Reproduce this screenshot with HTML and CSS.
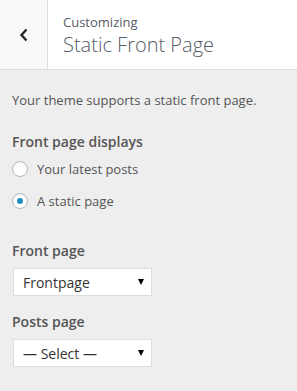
FILE: index.html
```html
<!DOCTYPE html>
<html lang="en">
<head>
    <meta charset="UTF-8">
    <meta name="viewport" content="width=device-width, initial-scale=1.0">
    <title>Static Front Page</title>
    <link rel="stylesheet" href="styles.css">
</head>
<body>
    <div class="panel-header">
        <button class="back-btn" aria-label="Back">
            <svg width="10" height="14" viewBox="0 0 10 14"><path d="M7.5 1.5 L2.5 7 L7.5 12.5" fill="none" stroke="#23282d" stroke-width="2.4"/></svg>
        </button>
        <div class="panel-title">
            <span class="action">Customizing</span>
            <h3>Static Front Page</h3>
        </div>
    </div>

    <div class="section">
        <p class="description">Your theme supports a static front page.</p>

        <div class="control">
            <span class="control-title">Front page displays</span>
            <label class="radio-row"><input type="radio" name="show_on_front"> Your latest posts</label>
            <label class="radio-row"><input type="radio" name="show_on_front" checked> A static page</label>
        </div>

        <div class="control select-control">
            <span class="control-title">Front page</span>
            <div class="select-wrap">
                <select><option>Frontpage</option></select>
            </div>
        </div>

        <div class="control">
            <span class="control-title">Posts page</span>
            <div class="select-wrap">
                <select><option>&mdash; Select &mdash;</option></select>
            </div>
        </div>
    </div>
</body>
</html>
```

FILE: styles.css
```css
body {
    margin: 0;
    background: #eee;
    font-family: "Open Sans", "Noto Sans", sans-serif;
    color: #555;
}
.panel-header {
    display: flex;
    height: 69px;
    background: #fff;
    border-bottom: 1px solid #ddd;
}
.back-btn {
    width: 48px;
    height: 69px;
    padding: 0;
    border: none;
    border-right: 1px solid #ddd;
    background: #f9f9f9;
    display: flex;
    align-items: center;
    justify-content: center;
}
.panel-title {
    padding: 13px 0 0 15px;
}
.action {
    display: block;
    font-size: 13px;
    line-height: 18px;
    color: #555d66;
}
.panel-title h3 {
    margin: 1px 0 0;
    font-size: 20px;
    font-weight: 200;
    line-height: 26px;
    color: #555d66;
}
.section {
    padding: 20px 12px;
}
.description {
    margin: 0 0 20px;
    font-size: 13px;
    line-height: 20px;
}
.control {
    margin-bottom: 14px;
}
.control-title {
    display: block;
    font-size: 14px;
    font-weight: 600;
    line-height: 24px;
    margin-bottom: 5px;
}
.radio-row {
    display: flex;
    align-items: center;
    font-size: 13px;
    line-height: 20px;
    margin-bottom: 12px;
}
.radio-row input {
    appearance: none;
    width: 16px;
    height: 16px;
    margin: 0 9px 0 0;
    border: 1px solid #b4b9be;
    border-radius: 50%;
    background: #fff;
    box-shadow: inset 0 1px 2px rgba(0,0,0,0.07);
    display: flex;
    align-items: center;
    justify-content: center;
}
.radio-row input:checked::before {
    content: "";
    width: 6px;
    height: 6px;
    border-radius: 50%;
    background: #1e8cbe;
}
.select-control {
    margin-top: 28px;
}
.select-wrap {
    position: relative;
    width: 139px;
    margin-left: 1px;
}
.select-wrap select {
    appearance: none;
    width: 100%;
    height: 28px;
    padding: 0 0 0 9px;
    border: 1px solid #ddd;
    border-radius: 0;
    background: #fff;
    font-family: inherit;
    font-size: 14px;
    color: #333;
}
.select-wrap::after {
    content: "";
    position: absolute;
    right: 8px;
    top: 11px;
    border-left: 3px solid transparent;
    border-right: 3px solid transparent;
    border-top: 6px solid #000;
    pointer-events: none;
}
```
